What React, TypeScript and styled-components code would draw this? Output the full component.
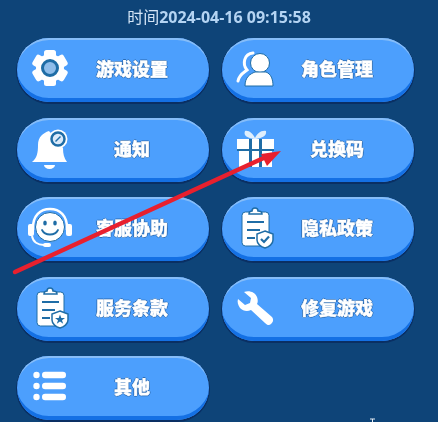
import type { ReactNode } from "react";
import styled, { createGlobalStyle } from "styled-components";

const GlobalStyle = createGlobalStyle`
   html, body {
      margin: 0;
      padding: 0;
      background: #0e4478;
   }
`;

const INK = "#1f6da6";

const Svg = ({ children }: { children: ReactNode }) => (
   <svg width="40" height="40" viewBox="0 0 40 40" overflow="visible">
      {children}
   </svg>
);

const GearIcon = () => (
   <Svg>
      <g fill="#fff">
         {[0, 60, 120, 180, 240, 300].map((a) => (
            <rect key={a} x="14" y="2" width="12" height="12" rx="2.5" transform={`rotate(${a} 20 20)`} />
         ))}
         <circle cx="20" cy="20" r="14" />
      </g>
      <circle cx="20" cy="20" r="7.5" fill="#8fbdea" stroke={INK} strokeWidth="3" />
   </Svg>
);

const PeopleIcon = () => (
   <Svg>
      <path d="M3 33C4 27 8 25 12 22C7 16 9 6 18 5" fill="none" stroke="#fff" strokeWidth="3" strokeLinecap="round" />
      <circle cx="25" cy="15" r="9.5" fill="#fff" stroke={INK} strokeWidth="1" />
      <path d="M10 38C10 29 15 26 20 24H31C36 26 38 31 38 38Z" fill="#fff" stroke={INK} strokeWidth="1" />
   </Svg>
);

const BellIcon = () => (
   <Svg>
      <path d="M14 37a5.5 4 0 0 0 11 0Z" fill="#fff" />
      <path d="M2 34C7 30 8 25 8 17C8 9 13 5 19 3L33 20C33 26 34 30 37 34Z" fill="#fff" />
      <circle cx="28" cy="11" r="9.5" fill="#fff" />
      <circle cx="28" cy="11" r="6.5" fill="#dbeafa" stroke={INK} strokeWidth="2.5" />
      <path d="M25.5 13.5L30.5 8.5" stroke={INK} strokeWidth="1.5" />
   </Svg>
);

const GiftIcon = () => (
   <Svg>
      <path d="M19 11C13 10 8 8 10 3C14 2 18 6 20 10C22 6 26 2 31 3C32 8 27 10 21 11Z" fill="#dfeefc" />
      <rect x="2" y="11" width="37" height="10" fill="#fff" />
      <rect x="4" y="21" width="33" height="18" fill="#fff" />
      <rect x="14" y="11" width="3" height="28" fill={INK} />
      <rect x="24" y="11" width="3" height="28" fill={INK} />
      <rect x="2" y="21" width="37" height="2" fill={INK} />
   </Svg>
);

const HeadsetIcon = () => (
   <Svg>
      <path d="M3 23C2 8 11 2 20 2C29 2 38 8 37 23" fill="none" stroke="#fff" strokeWidth="2.5" />
      <circle cx="20" cy="20" r="14.5" fill="#fff" stroke={INK} strokeWidth="1" />
      <rect x="-2" y="17" width="6" height="12" rx="2" fill="#fff" />
      <rect x="36" y="17" width="6" height="12" rx="2" fill="#fff" />
      <path d="M2 29C3 35 8 38 14 38" fill="none" stroke="#fff" strokeWidth="2" />
      <rect x="13" y="36" width="8" height="4" rx="2" fill="#fff" />
      <ellipse cx="15" cy="16" rx="1.8" ry="2.5" fill={INK} />
      <ellipse cx="25" cy="16" rx="1.8" ry="2.5" fill={INK} />
      <path d="M12 23C15 29 25 29 28 23" fill="none" stroke={INK} strokeWidth="1.8" strokeLinecap="round" />
   </Svg>
);

const Clipboard = ({ children }: { children: ReactNode }) => (
   <Svg>
      <rect x="7" y="5" width="27" height="34" rx="3.5" fill="#fff" stroke={INK} strokeWidth="1" />
      <path d="M14 7C14 4 16 4 17 4C17 0 23 0 23 4C25 4 27 4 27 7Z" fill="#fff" stroke={INK} strokeWidth="1.5" />
      <path d="M12 15H29M12 23H25M12 31H20" stroke={INK} strokeWidth="2.2" />
      <path d="M30 24L38 27V33C38 37 34 40 30 41C26 40 22 37 22 33V27Z" fill="#fff" stroke={INK} strokeWidth="1.5" />
      {children}
   </Svg>
);

const TermsIcon = () => (
   <Clipboard>
      <path d="M30 27.5L31.3 31H35L32 33.2L33.2 36.8L30 34.6L26.8 36.8L28 33.2L25 31H28.7Z" fill={INK} />
   </Clipboard>
);

const PrivacyIcon = () => (
   <Clipboard>
      <path d="M26 32L29 35L34 29.5" fill="none" stroke={INK} strokeWidth="2.2" />
   </Clipboard>
);

const WrenchIcon = () => (
   <Svg>
      <path
         d="M3 12L10 18L15 16L16 11L9 5C14 3 20 5 22 10C23 13 23 15 22 17L37 30C39 33 38 35 36 37C34 39 32 38 30 36L16 23C12 25 8 24 5 21C3 18 2 15 3 12Z"
         fill="#fff"
      />
   </Svg>
);

const ListIcon = () => (
   <Svg>
      {[9, 20, 31].map((y) => (
         <g key={y} fill="#fff">
            <circle cx="6.5" cy={y} r="3.2" />
            <rect x="12" y={y - 3.2} width="24" height="6.4" rx="3.2" />
         </g>
      ))}
   </Svg>
);

const items: { label: string; icon: ReactNode }[] = [
   { label: "游戏设置", icon: <GearIcon /> },
   { label: "角色管理", icon: <PeopleIcon /> },
   { label: "通知", icon: <BellIcon /> },
   { label: "兑换码", icon: <GiftIcon /> },
   { label: "客服协助", icon: <HeadsetIcon /> },
   { label: "隐私政策", icon: <PrivacyIcon /> },
   { label: "服务条款", icon: <TermsIcon /> },
   { label: "修复游戏", icon: <WrenchIcon /> },
   { label: "其他", icon: <ListIcon /> },
];

const App = () => {
   return (
      <Page>
         <GlobalStyle />
         <Clock>
            时间<b>2024-04-16 09:15:58</b>
         </Clock>
         <Menu>
            {items.map((item) => (
               <MenuButton key={item.label}>
                  <IconSlot>{item.icon}</IconSlot>
                  <Label>{item.label}</Label>
               </MenuButton>
            ))}
         </Menu>
         <Annotation width="438" height="422" viewBox="0 0 438 422">
            <path d="M15 272L268 156" stroke="#e8202e" strokeWidth="4.5" strokeLinecap="round" />
            <path d="M281 151L261 154L267 166Z" fill="#e8202e" />
         </Annotation>
         <TextCursor width="7" height="12" viewBox="0 0 7 12">
            <path d="M1 1H6M3.5 1V12" stroke="#e8eef5" strokeWidth="1" fill="none" />
         </TextCursor>
      </Page>
   );
};

export default App;

const Page = styled.div`
   position: relative;
   width: 438px;
   height: 422px;
   overflow: hidden;
   background: #0e4478;
   font-family: "Noto Sans CJK SC", sans-serif;
   filter: blur(0.35px);
`;

const Clock = styled.div`
   height: 38px;
   padding-top: 5px;
   box-sizing: border-box;
   text-align: center;
   font-size: 16px;
   line-height: 22px;
   color: #d3e4f6;
   white-space: nowrap;
   b {
      font-family: "Open Sans", "Noto Sans CJK SC", sans-serif;
      font-weight: 700;
      color: #b4d4f3;
   }
`;

const Menu = styled.div`
   display: grid;
   grid-template-columns: 192px 192px;
   grid-auto-rows: 64px;
   column-gap: 13px;
   row-gap: 15.5px;
   padding-left: 17px;
`;

const MenuButton = styled.div`
   display: flex;
   align-items: center;
   padding: 0 15px 4px 13px;
   box-sizing: border-box;
   border-radius: 32px;
   background: #4c9ffd;
   box-shadow:
      inset 0 3px 0 -1px #86bdf8,
      inset 0 -5px 0 -1px #1470e4,
      0 1px 0 1px #0a2f63;
`;

const IconSlot = styled.div`
   flex: none;
   display: flex;
   justify-content: center;
   width: 40px;
   height: 40px;
`;

const Label = styled.div`
   flex: 1;
   text-align: center;
   font-size: 18px;
   font-weight: 900;
   line-height: 24px;
   color: #fff;
   -webkit-text-stroke: 0.4px #fff;
   text-shadow:
      1px 0 0 #2c6cb4,
      -1px 0 0 #2c6cb4,
      0 1px 0 #2c6cb4,
      0 -1px 0 #2c6cb4;
`;

const Annotation = styled.svg`
   position: absolute;
   top: 0;
   left: 0;
   pointer-events: none;
`;

const TextCursor = styled.svg`
   position: absolute;
   top: 418px;
   left: 369px;
`;
